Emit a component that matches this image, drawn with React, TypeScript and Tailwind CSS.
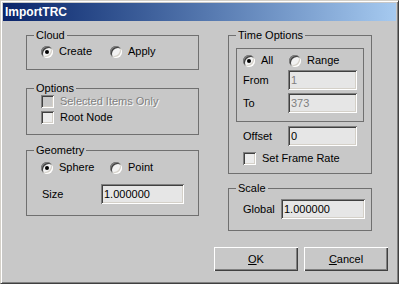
import type { ReactNode } from "react";

const FONT = { fontFamily: '"Liberation Sans", Arial, sans-serif' };

function Group({
  label,
  className = "",
  children,
}: {
  label: string;
  className?: string;
  children: ReactNode;
}) {
  return (
    <fieldset className={`border border-[#707070] p-0 m-0 ${className}`}>
      <legend className="ml-[7px] px-[2px] text-[11px] leading-[13px] text-black">
        {label}
      </legend>
      {children}
    </fieldset>
  );
}

function Radio({ checked, label }: { checked?: boolean; label: string }) {
  return (
    <div className="flex items-center h-[13px]">
      <span className="relative w-[12px] h-[12px] rounded-full bg-[#f2f2f2] shadow-[inset_1px_1px_0_#808080,inset_-1px_-1px_0_#ffffff,inset_2px_2px_0_#404040,inset_-2px_-2px_0_#d4d0c8] flex items-center justify-center">
        {checked && <span className="w-[4px] h-[4px] rounded-full bg-black" />}
      </span>
      <span className="ml-[6px] text-[11px] leading-[13px]">{label}</span>
    </div>
  );
}

function Check({ label, disabled }: { label: string; disabled?: boolean }) {
  return (
    <div className="flex items-center h-[13px]">
      <span
        className={`w-[13px] h-[13px] shadow-[inset_1px_1px_0_#808080,inset_-1px_-1px_0_#ffffff,inset_2px_2px_0_#404040,inset_-2px_-2px_0_#d4d0c8] ${
          disabled ? "bg-[#c8c8c8]" : "bg-[#ececec]"
        }`}
      />
      <span
        className={`ml-[6px] text-[11px] leading-[13px] ${
          disabled
            ? "text-[#808080] [text-shadow:1px_1px_0_#ffffff]"
            : "text-black"
        }`}
      >
        {label}
      </span>
    </div>
  );
}

function Field({
  value,
  width,
  disabled,
}: {
  value: string;
  width: string;
  disabled?: boolean;
}) {
  return (
    <div
      className={`${width} h-[20px] bg-[#e6e6e6] shadow-[inset_1px_1px_0_#808080,inset_-1px_-1px_0_#ffffff,inset_2px_2px_0_#404040,inset_-2px_-2px_0_#d4d0c8] flex items-center pl-[3px] text-[11px] ${
        disabled ? "text-[#808080]" : "text-black"
      }`}
    >
      {value}
    </div>
  );
}

function Button({ hot, rest }: { hot: string; rest: string }) {
  return (
    <div className="w-[84px] h-[24px] bg-[#c8c8c8] shadow-[inset_1px_1px_0_#ffffff,inset_-1px_-1px_0_#404040,inset_-2px_-2px_0_#808080] flex items-center justify-center text-[11px] text-black">
      <span>
        <span className="underline">{hot}</span>
        {rest}
      </span>
    </div>
  );
}

export default function App() {
  return (
    <div
      style={FONT}
      className="w-[399px] h-[284px] bg-[#c8c8c8] border border-t-[#d4d0c8] border-l-[#d4d0c8] border-r-[#404040] border-b-[#404040] shadow-[inset_1px_1px_0_#ffffff,inset_-1px_-1px_0_#808080] p-[2px] flex flex-col text-black"
    >
      <div className="h-[18px] bg-gradient-to-r from-[#0a246a] to-[#a6caf0] flex items-center pl-[2px]">
        <span className="text-white font-bold text-[12px] leading-none">ImportTRC</span>
      </div>

      <div className="flex flex-col pt-[8px]">
        <div className="flex pl-[23px]">
          {/* left column */}
          <div className="w-[173px] flex flex-col">
            <Group label="Cloud">
              <div className="flex pl-[14px] mt-[3px] pb-[11px]">
                <div className="w-[69px]">
                  <Radio checked label="Create" />
                </div>
                <Radio label="Apply" />
              </div>
            </Group>

            <Group label="Options" className="mt-[12px]">
              <div className="flex flex-col gap-[3px] pl-[14px] pb-[10px]">
                <Check disabled label="Selected Items Only" />
                <Check label="Root Node" />
              </div>
            </Group>

            <Group label="Geometry" className="mt-[9px]">
              <div className="flex pl-[14px] mt-[4px]">
                <div className="w-[69px]">
                  <Radio checked label="Sphere" />
                </div>
                <Radio label="Point" />
              </div>
              <div className="flex items-center pl-[15px] mt-[10px] pb-[11px]">
                <span className="w-[59px] text-[11px]">Size</span>
                <Field value="1.000000" width="w-[83px]" />
              </div>
            </Group>
          </div>

          {/* right column */}
          <div className="w-[144px] ml-[29px] flex flex-col">
            <Group label="Time Options">
              <div className="mx-[7px] mt-[6px] border border-[#707070] pl-[6px] pb-[8px]">
                <div className="flex mt-[5px]">
                  <div className="w-[46px]">
                    <Radio checked label="All" />
                  </div>
                  <Radio label="Range" />
                </div>
                <div className="flex items-center mt-[3px]">
                  <span className="w-[45px] text-[11px]">From</span>
                  <Field value="1" width="w-[69px]" disabled />
                </div>
                <div className="flex items-center mt-[3px]">
                  <span className="w-[45px] text-[11px]">To</span>
                  <Field value="373" width="w-[69px]" disabled />
                </div>
              </div>
              <div className="flex items-center pl-[14px] mt-[4px]">
                <span className="w-[45px] text-[11px]">Offset</span>
                <Field value="0" width="w-[69px]" />
              </div>
              <div className="pl-[14px] mt-[6px] pb-[8px]">
                <Check label="Set Frame Rate" />
              </div>
            </Group>

            <Group label="Scale" className="mt-[8px]">
              <div className="flex items-center pl-[14px] mt-[4px] pb-[11px]">
                <span className="w-[38px] text-[11px]">Global</span>
                <Field value="1.000000" width="w-[84px]" />
              </div>
            </Group>
          </div>
        </div>

        <div className="flex justify-end gap-[6px] pr-[8px] mt-[16px]">
          <Button hot="O" rest="K" />
          <Button hot="C" rest="ancel" />
        </div>
      </div>
    </div>
  );
}
